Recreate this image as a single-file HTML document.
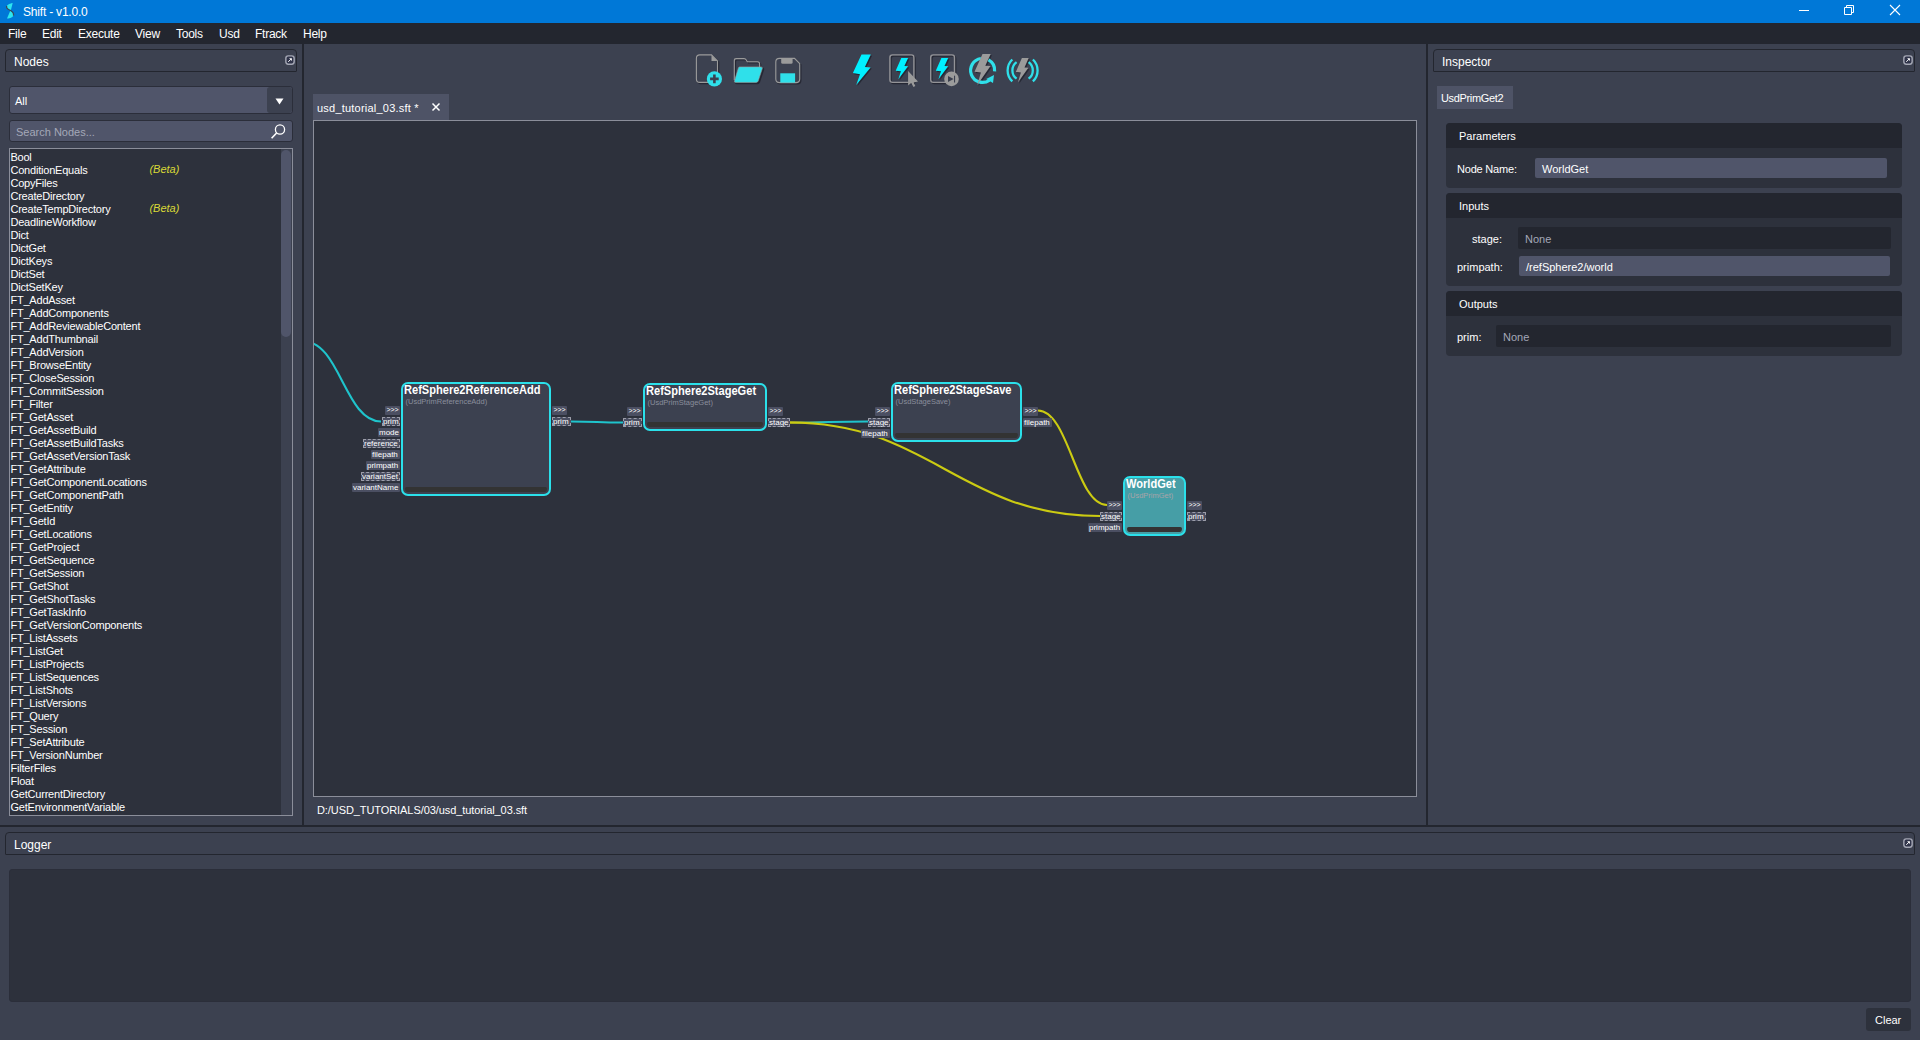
<!DOCTYPE html>
<html lang="en"><head><meta charset="utf-8"><title>Shift - v1.0.0</title>
<style>
*{box-sizing:border-box;margin:0;padding:0}
html,body{width:1920px;height:1040px;overflow:hidden;background:#3c4150;font-family:"Liberation Sans",sans-serif;font-size:11px;color:#fff}
.abs{position:absolute}
#titlebar{position:absolute;left:0;top:0;width:1920px;height:23px;background:#0078d7}
#titlebar .t{position:absolute;left:23px;top:5px;font-size:12px;line-height:14px;color:#fff;letter-spacing:-.2px}
#menubar{position:absolute;left:0;top:23px;width:1920px;height:21px;background:#23262f}
#menubar span{position:absolute;top:4px;font-size:12px;line-height:14px;color:#fff;letter-spacing:-.25px}
.dock{position:absolute;height:23px;border:1px solid #23262f;border-radius:4px 4px 1px 1px;background:#3c4150;font-size:12px;line-height:14px}
.dock .t{position:absolute;left:8px;top:5px}
.dock svg{position:absolute;right:1px;top:5px}
.vsplit{position:absolute;width:2px;background:#23262f}
#combo{position:absolute;left:9px;top:86px;width:284px;height:28px;border:1px solid #2b2e3a;border-radius:3px;background:#50556a}
#combo .t{position:absolute;left:5px;top:8px;line-height:13px}
#combo .btn{position:absolute;right:0;top:0;width:25px;height:26px;background:#3c4150;border-radius:3px}
#search{position:absolute;left:9px;top:120px;width:284px;height:22px;border:1px solid #2b2e3a;border-radius:3px;background:#50556a}
#search .t{position:absolute;left:6px;top:5px;line-height:13px;color:#a4a8b8}
#list{position:absolute;left:9px;top:148px;width:284px;height:668px;border:1px solid #8b8e9a;background:#2d313c;overflow:hidden}
#list .li{position:relative;height:13px;line-height:13px;white-space:nowrap;padding-left:0;letter-spacing:-.2px}
#list .inner{position:absolute;left:.4px;top:2px}
#list .beta{position:absolute;left:139px;top:-1px;color:#d9d936;font-style:italic;letter-spacing:0}
#list .sbar{position:absolute;right:0;top:0;width:11px;height:666px;background:#3c4150}
#list .sthumb{position:absolute;right:1px;top:1px;width:10px;height:187px;border-radius:5px;background:#50556a}
#tab{position:absolute;left:313px;top:94px;width:136px;height:26px;background:#4e5366}
#tab .t{position:absolute;left:4px;top:8px;line-height:13px;letter-spacing:.22px}
#canvas{position:absolute;left:313px;top:120px;width:1104px;height:677px;border:1px solid #8b8e9a;background:#2d313c;overflow:hidden}
#path{position:absolute;left:317px;top:804px;line-height:13px;letter-spacing:-.08px}
#insptab{position:absolute;left:1437px;top:86px;width:76px;height:23px;background:#4e5366}
#insptab .t{position:absolute;left:4px;top:6px;line-height:13px;letter-spacing:-.35px}
.grp{position:absolute;left:1446px;width:456px;background:#2d313c;border-radius:4px;overflow:hidden}
.grp .h{position:absolute;left:0;top:0;width:100%;height:25px;background:#23262f}
.grp .h span{position:absolute;left:13px;top:7px;line-height:13px}
.lbl{position:absolute;line-height:13px;white-space:nowrap}
.fld{position:absolute;height:20px;border-radius:2px;background:#50556a}
.fld span{position:absolute;left:7px;top:5px;line-height:13px}
.fld.ro{background:#23262f;border:none;height:22px}
.fld.ro span{color:#a4a8b8;top:6px;left:7px}
#logtext{position:absolute;left:9px;top:869px;width:1902px;height:133px;border:1px solid #2b2e3a;border-radius:3px;background:#2d313c}
#clear{position:absolute;left:1866px;top:1008px;width:45px;height:23px;border-radius:3px;background:#2d313c}
#clear span{position:absolute;left:9px;top:6px;line-height:13px}
/* graph */
.node{position:absolute;border:2px solid #2be0ea;border-radius:7px;background:#3c4150}
.node.sel{background:#469ea6}
.node .nt{position:absolute;left:.7px;top:0px;font-size:12px;font-weight:700;line-height:12px;white-space:nowrap;color:#fff;transform:scaleX(.922);transform-origin:0 0}
.node .ns{position:absolute;left:2.5px;top:12.7px;font-size:7.5px;line-height:9px;white-space:nowrap;color:#8a8e9c}
.node.sel .ns{color:#a9a4a8}
.node .bar{position:absolute;left:2px;right:2px;bottom:2px;height:5px;background:#333;border-radius:2px 2px 4px 4px}
.pl{position:absolute;height:9px;background:#4b4f62;font-size:8px;line-height:9px;color:#fff;white-space:nowrap;padding:0 1px;border-radius:1px}
.pl.d{outline:1px dashed #9c9eaa;outline-offset:-1px}
.pl.r{text-align:right}
.pl.a{font-size:7px;line-height:8px;letter-spacing:-.1px;padding-left:1.5px}

</style></head>
<body>
<div id="titlebar">
<svg class="abs" style="left:0;top:0" width="22" height="23" viewBox="0 0 22 23"><path d="M12.7 3 C9 3.5 6.3 5.5 6.5 7.5 C6.7 9 9 9.8 10.8 10.6 Z" fill="#2ce6f0"/><path d="M10.4 10.4 C12.5 11.5 13.8 13 13.7 14.8 C13.5 17 10 18.5 7 18.6 Z" fill="#2ce6f0"/><path d="M6.7 6 C5.8 9 9 9.6 10.6 10.5 C12.4 11.5 14 12.8 13.5 15.6" fill="none" stroke="#37485a" stroke-width="1.3"/></svg>
<span class="t">Shift - v1.0.0</span>
<svg class="abs" style="left:1780px;top:0" width="140" height="23" viewBox="0 0 140 23"><g stroke="#fff" stroke-width="1" fill="none"><path d="M19 10.5h10"/><path d="M64.5 7.5h7v7h-7z"/><path d="M66.5 7.5v-2h7v7h-2"/><path d="M110 5l10 10M120 5l-10 10" stroke-width="1.1"/></g></svg>
</div>
<div id="menubar">
<span style="left:8px">File</span><span style="left:42px">Edit</span><span style="left:78px">Execute</span><span style="left:135px">View</span><span style="left:176px">Tools</span><span style="left:219px">Usd</span><span style="left:255px">Ftrack</span><span style="left:303px">Help</span>
</div>

<div class="dock" style="left:5px;top:49px;width:292px"><span class="t">Nodes</span><svg width="10" height="10" viewBox="0 0 10 10"><rect x=".85" y=".85" width="8.3" height="8.3" rx="2.4" fill="#30344a" stroke="#a3a6b3" stroke-width="1.45"/><path d="M3.3 6.8L6 4.1" stroke="#fff" stroke-width="1" fill="none"/><path d="M4.1 3.2H6.9V6Z" fill="#fff"/></svg></div>
<div id="combo"><span class="t">All</span><div class="btn"><svg class="abs" style="left:8px;top:10.6px" width="9" height="7" viewBox="0 0 9 7"><path d="M.5 .5h8L4.5 6.5z" fill="#fff"/></svg></div></div>
<div id="search"><span class="t">Search Nodes...</span><svg class="abs" style="left:260px;top:2px" width="17" height="17" viewBox="0 0 17 17"><circle cx="10" cy="6.5" r="4.6" fill="none" stroke="#fff" stroke-width="1.3"/><path d="M6.6 10L1.6 15.2" stroke="#fff" stroke-width="1.6"/></svg></div>
<div id="list"><div class="inner">
<div class="li">Bool</div>
<div class="li">ConditionEquals<span class="beta">(Beta)</span></div>
<div class="li">CopyFiles</div>
<div class="li">CreateDirectory</div>
<div class="li">CreateTempDirectory<span class="beta">(Beta)</span></div>
<div class="li">DeadlineWorkflow</div>
<div class="li">Dict</div>
<div class="li">DictGet</div>
<div class="li">DictKeys</div>
<div class="li">DictSet</div>
<div class="li">DictSetKey</div>
<div class="li">FT_AddAsset</div>
<div class="li">FT_AddComponents</div>
<div class="li">FT_AddReviewableContent</div>
<div class="li">FT_AddThumbnail</div>
<div class="li">FT_AddVersion</div>
<div class="li">FT_BrowseEntity</div>
<div class="li">FT_CloseSession</div>
<div class="li">FT_CommitSession</div>
<div class="li">FT_Filter</div>
<div class="li">FT_GetAsset</div>
<div class="li">FT_GetAssetBuild</div>
<div class="li">FT_GetAssetBuildTasks</div>
<div class="li">FT_GetAssetVersionTask</div>
<div class="li">FT_GetAttribute</div>
<div class="li">FT_GetComponentLocations</div>
<div class="li">FT_GetComponentPath</div>
<div class="li">FT_GetEntity</div>
<div class="li">FT_GetId</div>
<div class="li">FT_GetLocations</div>
<div class="li">FT_GetProject</div>
<div class="li">FT_GetSequence</div>
<div class="li">FT_GetSession</div>
<div class="li">FT_GetShot</div>
<div class="li">FT_GetShotTasks</div>
<div class="li">FT_GetTaskInfo</div>
<div class="li">FT_GetVersionComponents</div>
<div class="li">FT_ListAssets</div>
<div class="li">FT_ListGet</div>
<div class="li">FT_ListProjects</div>
<div class="li">FT_ListSequences</div>
<div class="li">FT_ListShots</div>
<div class="li">FT_ListVersions</div>
<div class="li">FT_Query</div>
<div class="li">FT_Session</div>
<div class="li">FT_SetAttribute</div>
<div class="li">FT_VersionNumber</div>
<div class="li">FilterFiles</div>
<div class="li">Float</div>
<div class="li">GetCurrentDirectory</div>
<div class="li">GetEnvironmentVariable</div>
</div><div class="sbar"><div class="sthumb"></div></div></div>

<div class="vsplit" style="left:302px;top:44px;height:781px"></div>
<div class="vsplit" style="left:1426px;top:44px;height:781px"></div>
<div class="vsplit" style="left:0;top:825px;width:1920px;height:2px"></div>

<svg class="abs" style="left:690px;top:48px" width="360" height="44" viewBox="690 48 360 44">
<defs>
<path id="bolt" d="M861.5 54.6 L870.8 54.6 L864.9 66.9 L870.6 67.4 L856.2 85.1 L860 74.2 L852.9 73.1 Z"/>
<path id="sbolt" d="M901.3 58.1 L908.1 58.1 L904.4 66 L908.1 66.3 L898.3 79.2 L900.9 71.2 L895.7 70.7 Z"/>
</defs>
<!-- shadows -->
<g transform="translate(1.2,1.2)" fill="none" stroke="#262834" stroke-width="1.2">
<path d="M699.8 54.9 H711.5 L717.5 60.9 V79.5 Q717.5 82.4 714.5 82.4 H699.8 Q696.4 82.4 696.4 79 V58.3 Q696.4 54.9 699.8 54.9Z"/>
<path d="M734.3 80 V60.5 Q734.3 58.6 736.3 58.6 H744 Q745.5 58.6 746.3 60 L747.3 61.8 H757.5 Q759.6 61.8 759.6 64 V67"/>
<path d="M739.6 66.9 H761 Q762.8 66.9 762.3 68.6 L758.2 81 Q757.7 82.4 756.2 82.4 H735.6 Q733.9 82.4 734.5 80.8 L738.4 68 Q738.7 66.9 739.6 66.9Z" fill="#262834"/>
<path d="M779.5 58.4 H794.5 L799.7 63.6 V79 Q799.7 82.6 796 82.6 H779.5 Q775.8 82.6 775.8 79 V62 Q775.8 58.4 779.5 58.4Z"/>
<use href="#bolt" fill="#262834" stroke="none"/>
<rect x="889.9" y="54.9" width="24" height="27.5" rx="2.6" stroke-width="1.35"/>
<rect x="930.7" y="54.9" width="23.8" height="27.5" rx="2.6" stroke-width="1.35"/>
<use href="#sbolt" fill="#262834" stroke="none"/>
<use href="#sbolt" x="40.1" fill="#262834" stroke="none"/>
<path d="M982.5 54.1 L990.7 54.1 L985.3 65.8 L990.5 66 L977.3 85 L980.9 72.4 L974.5 71.7 Z" fill="#262834" stroke="none"/>
<path d="M1021.9 58.1 L1028.7 58.1 L1024.5 67.5 L1028.4 67.7 L1017.9 82.5 L1020.9 72.4 L1015.8 71.9 Z" fill="#262834" stroke="none"/>
</g>
<!-- new file -->
<path d="M699.8 54.9 H711.5 L717.5 60.9 V79.5 Q717.5 82.4 714.5 82.4 H699.8 Q696.4 82.4 696.4 79 V58.3 Q696.4 54.9 699.8 54.9Z" fill="#3c4150" stroke="#9b9b9b" stroke-width="1.1"/>
<path d="M711.5 54.9 L717.5 60.9 H711.5Z" fill="#9b9b9b"/>
<circle cx="714.4" cy="78.9" r="7.6" fill="#2fe0ea"/>
<path d="M710.1 78.9h8.6M714.4 74.6v8.6" stroke="#3c4150" stroke-width="2.6"/>
<!-- open folder -->
<path d="M734.3 80 V60.5 Q734.3 58.6 736.3 58.6 H744 Q745.5 58.6 746.3 60 L747.3 61.8 H757.5 Q759.6 61.8 759.6 64 V67" fill="none" stroke="#9b9b9b" stroke-width="1.1"/>
<path d="M739.6 66.9 H761 Q762.8 66.9 762.3 68.6 L758.2 81 Q757.7 82.4 756.2 82.4 H735.6 Q733.9 82.4 734.5 80.8 L738.4 68 Q738.7 66.9 739.6 66.9Z" fill="#2fe0ea" stroke="#9b9b9b" stroke-width=".6"/>
<!-- save -->
<path d="M779.5 58.4 H794.5 L799.7 63.6 V79 Q799.7 82.6 796 82.6 H779.5 Q775.8 82.6 775.8 79 V62 Q775.8 58.4 779.5 58.4Z" fill="#3c4150" stroke="#9b9b9b" stroke-width="1.1"/>
<path d="M781.2 58.4 H792.6 V62.4 Q792.6 63.8 791.2 63.8 H782.6 Q781.2 63.8 781.2 62.4Z" fill="#9b9b9b"/>
<rect x="780.3" y="73.3" width="14.8" height="9.3" fill="#2fe0ea"/>
<!-- bolt -->
<use href="#bolt" fill="#00f0ff"/>
<!-- box bolt cursor -->
<rect x="889.9" y="54.9" width="24" height="27.5" rx="2.6" fill="none" stroke="#939397" stroke-width="1.4"/>
<use href="#sbolt" fill="#00f0ff"/>
<path d="M908.1 71 L918 81.5 L913.6 82.4 L915.3 86 L913.5 87 L911.2 83 L908.1 85.6 Z" fill="#9b9b9b"/>
<!-- box bolt play -->
<rect x="930.7" y="54.9" width="23.8" height="27.5" rx="2.6" fill="none" stroke="#939397" stroke-width="1.4"/>
<use href="#sbolt" x="40.1" fill="#00f0ff"/>
<circle cx="951.5" cy="78.9" r="7.3" fill="#9b9b9b"/>
<path d="M948 75.9 L953.6 78.9 L948 82Z" fill="#3c4150"/><rect x="954" y="75.7" width="1.1" height="6.8" fill="#3c4150"/>
<!-- refresh bolt -->
<path d="M980.9 58.5 A12 12 0 1 0 989.5 80.2" fill="none" stroke="#2fe0ea" stroke-width="3.2"/>
<path d="M988.5 59.9 A12 12 0 0 1 994.6 71.4" fill="none" stroke="#2fe0ea" stroke-width="3.2"/>
<path d="M986.2 78.9 L994 75 L993 82.9 Z" fill="#2fe0ea"/>
<path d="M982.5 54.1 L990.7 54.1 L985.3 65.8 L990.5 66 L977.3 85 L980.9 72.4 L974.5 71.7 Z" fill="#9b9b9b"/>
<!-- broadcast bolt -->
<g fill="none" stroke="#2fe0ea" stroke-width="2.3">
<path d="M1016.6 62.15 A10.2 10.2 0 0 0 1016.6 78.65"/>
<path d="M1012.3 59.5 A15 15 0 0 0 1012.3 81.3"/>
<path d="M1028.6 62.15 A10.2 10.2 0 0 1 1028.6 78.65"/>
<path d="M1032.9 59.5 A15 15 0 0 1 1032.9 81.3"/>
</g>
<path d="M1021.9 58.1 L1028.7 58.1 L1024.5 67.5 L1028.4 67.7 L1017.9 82.5 L1020.9 72.4 L1015.8 71.9 Z" fill="#9b9b9b"/>
</svg>

<div id="tab"><span class="t">usd_tutorial_03.sft *</span><svg class="abs" style="left:118px;top:8px" width="10" height="10" viewBox="0 0 10 10"><path d="M1.5 1.5l7 7M8.5 1.5l-7 7" stroke="#fff" stroke-width="1.5"/></svg></div>
<div id="canvas">
<div class="abs" style="left:-314px;top:-121px;width:1920px;height:1040px">
<svg class="abs" style="left:0;top:0" width="1920" height="1040" viewBox="0 0 1920 1040" fill="none" stroke-width="2.1" stroke-linecap="butt">
<defs><linearGradient id="gyc" x1="790" y1="0" x2="868" y2="0" gradientUnits="userSpaceOnUse"><stop offset="0" stop-color="#c8d21e"/><stop offset=".45" stop-color="#1fc4cc"/><stop offset="1" stop-color="#1fc4cc"/></linearGradient></defs>
<path d="M303.8 341.4 C 339.8 341.4, 345 421.5, 381 421.5" stroke="#1fc4cc"/>
<path d="M571 421.5 C 597 421.5, 597 422.5, 623 422.5" stroke="#1fc4cc"/>
<path d="M790 422.5 C 829 422.5, 829 421.5, 868 421.5" stroke="url(#gyc)"/>
<path d="M790 422.5 C 929.5 422.5, 960.5 516, 1100 516" stroke="#cbcb12"/>
<path d="M1038 410.5 C 1069 410.5, 1076 505, 1107 505" stroke="#cbcb12"/>
</svg>

<div class="node" style="left:401px;top:382px;width:150px;height:114px"><span class="nt">RefSphere2ReferenceAdd</span><span class="ns">(UsdPrimReferenceAdd)</span><div class="bar"></div></div>
<div class="pl a" style="left:385px;top:406px;width:15px">&gt;&gt;&gt;</div>
<div class="pl d" style="left:382px;top:417px;width:18px">prim</div>
<div class="pl" style="left:378px;top:428px;width:22px">mode</div>
<div class="pl d" style="left:363px;top:439px;width:37px">reference</div>
<div class="pl" style="left:371px;top:450px;width:29px">filepath</div>
<div class="pl" style="left:366px;top:461px;width:34px">primpath</div>
<div class="pl d" style="left:361px;top:472px;width:39px">variantSet</div>
<div class="pl" style="left:352px;top:483px;width:48px">variantName</div>
<div class="pl a" style="left:552px;top:406px;width:15px">&gt;&gt;&gt;</div>
<div class="pl d" style="left:552px;top:417px;width:19px">prim</div>

<div class="node" style="left:643px;top:383px;width:124px;height:48px"><span class="nt">RefSphere2StageGet</span><span class="ns">(UsdPrimStageGet)</span><div class="bar"></div></div>
<div class="pl a" style="left:627px;top:407px;width:15px">&gt;&gt;&gt;</div>
<div class="pl d" style="left:623px;top:418px;width:19px">prim</div>
<div class="pl a" style="left:768px;top:407px;width:15px">&gt;&gt;&gt;</div>
<div class="pl d" style="left:768px;top:418px;width:22px">stage</div>

<div class="node" style="left:891px;top:382px;width:131px;height:60px"><span class="nt">RefSphere2StageSave</span><span class="ns">(UsdStageSave)</span><div class="bar"></div></div>
<div class="pl a" style="left:875px;top:407px;width:15px">&gt;&gt;&gt;</div>
<div class="pl d" style="left:868px;top:418px;width:22px">stage</div>
<div class="pl" style="left:861px;top:429px;width:29px">filepath</div>
<div class="pl a" style="left:1023px;top:407px;width:15px">&gt;&gt;&gt;</div>
<div class="pl" style="left:1023px;top:418px;width:29px">filepath</div>

<div class="node sel" style="left:1123px;top:476px;width:63px;height:60px"><span class="nt">WorldGet</span><span class="ns">(UsdPrimGet)</span><div class="bar"></div></div>
<div class="pl a" style="left:1107px;top:501px;width:15px">&gt;&gt;&gt;</div>
<div class="pl d" style="left:1100px;top:512px;width:22px">stage</div>
<div class="pl" style="left:1088px;top:523px;width:34px">primpath</div>
<div class="pl a" style="left:1187px;top:501px;width:15px">&gt;&gt;&gt;</div>
<div class="pl d" style="left:1187px;top:512px;width:19px">prim</div>
</div>

</div>
<div id="path">D:/USD_TUTORIALS/03/usd_tutorial_03.sft</div>

<div class="dock" style="left:1433px;top:49px;width:482px"><span class="t">Inspector</span><svg width="10" height="10" viewBox="0 0 10 10"><rect x=".85" y=".85" width="8.3" height="8.3" rx="2.4" fill="#30344a" stroke="#a3a6b3" stroke-width="1.45"/><path d="M3.3 6.8L6 4.1" stroke="#fff" stroke-width="1" fill="none"/><path d="M4.1 3.2H6.9V6Z" fill="#fff"/></svg></div>
<div id="insptab"><span class="t">UsdPrimGet2</span></div>

<div class="grp" style="top:123px;height:65px"><div class="h"><span>Parameters</span></div>
<span class="lbl" style="left:11px;top:40px;letter-spacing:-.2px">Node Name:</span>
<div class="fld" style="left:89px;top:35px;width:352px"><span>WorldGet</span></div></div>

<div class="grp" style="top:193px;height:93px"><div class="h"><span>Inputs</span></div>
<span class="lbl" style="left:26px;top:40px">stage:</span>
<div class="fld ro" style="left:72px;top:34px;width:373px"><span>None</span></div>
<span class="lbl" style="left:11px;top:68px">primpath:</span>
<div class="fld" style="left:73px;top:63px;width:371px"><span>/refSphere2/world</span></div></div>

<div class="grp" style="top:291px;height:65px"><div class="h"><span>Outputs</span></div>
<span class="lbl" style="left:11px;top:40px">prim:</span>
<div class="fld ro" style="left:50px;top:34px;width:395px"><span>None</span></div></div>

<div class="dock" style="left:5px;top:832px;width:1910px"><span class="t">Logger</span><svg width="10" height="10" viewBox="0 0 10 10"><rect x=".85" y=".85" width="8.3" height="8.3" rx="2.4" fill="#30344a" stroke="#a3a6b3" stroke-width="1.45"/><path d="M3.3 6.8L6 4.1" stroke="#fff" stroke-width="1" fill="none"/><path d="M4.1 3.2H6.9V6Z" fill="#fff"/></svg></div>
<div id="logtext"></div>
<div id="clear"><span>Clear</span></div>

</body></html>
